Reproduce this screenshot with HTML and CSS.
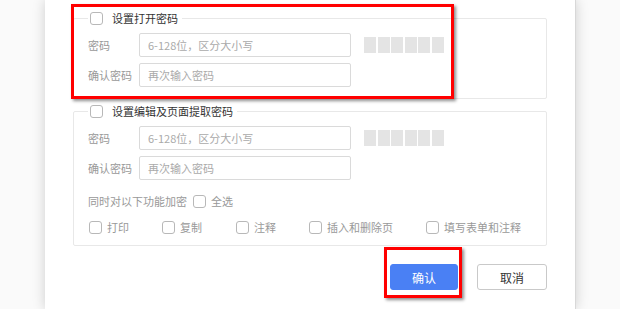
FILE: index.html
```html
<!DOCTYPE html>
<html>
  <head>
    <meta charset="UTF-8" />
    <title>加密</title>
    <link rel="stylesheet" href="styles.css">
  </head>

  <body>
    <div class="dialog">
      <fieldset class="group">
        <legend><label class="check"><span class="box"></span><span class="title">设置打开密码</span></label></legend>
        <div class="row">
          <span class="label">密码</span>
          <input class="input" type="password" placeholder="6-128位，区分大小写" />
          <div class="meter"><i></i><i></i><i></i><i></i><i></i><i></i></div>
        </div>
        <div class="row">
          <span class="label">确认密码</span>
          <input class="input" type="password" placeholder="再次输入密码" />
        </div>
      </fieldset>

      <fieldset class="group second">
        <legend><label class="check"><span class="box"></span><span class="title">设置编辑及页面提取密码</span></label></legend>
        <div class="row">
          <span class="label">密码</span>
          <input class="input" type="password" placeholder="6-128位，区分大小写" />
          <div class="meter"><i></i><i></i><i></i><i></i><i></i><i></i></div>
        </div>
        <div class="row">
          <span class="label">确认密码</span>
          <input class="input" type="password" placeholder="再次输入密码" />
        </div>
        <div class="all">
          同时对以下功能加密
          <label class="check"><span class="box"></span>全选</label>
        </div>
        <div class="perms">
          <label class="check"><span class="box"></span>打印</label>
          <label class="check"><span class="box"></span>复制</label>
          <label class="check"><span class="box"></span>注释</label>
          <label class="check"><span class="box"></span>插入和删除页</label>
          <label class="check"><span class="box"></span>填写表单和注释</label>
        </div>
      </fieldset>

      <div class="actions">
        <button class="btn primary">确认</button>
        <button class="btn">取消</button>
      </div>
    </div>

    <div class="mark mark-top"></div>
    <div class="mark mark-ok"></div>
  </body>
</html>
```

FILE: styles.css
```css
html,
body {
  margin: 0;
  height: 100%;
  overflow: hidden;
}

body {
  position: relative;
  background-color: #fafafa;
  font-family: "Noto Sans CJK SC", "Noto Sans", sans-serif;
  font-size: 11px;
  color: #999;
}

.dialog {
  margin-left: 45px;
  width: 531px;
  height: 100%;
  box-sizing: border-box;
  padding: 11px 28px 0 28px;
  background: #fff;
  border-right: 1px solid #d8d8d8;
  box-shadow: 0 0 12px rgba(0, 0, 0, 0.18);
}

.group {
  margin: 0;
  padding: 8px 14px 11px 14px;
  border: 1px solid #e8e8e8;
  border-radius: 2px;
  min-inline-size: 0;
}

.group.second {
  margin-top: 5px;
  padding-bottom: 9px;
}

.group legend {
  margin-left: 0;
  padding: 0 4px 0 2px;
  height: 14px;
  line-height: 14px;
}

.check {
  display: inline-flex;
  align-items: center;
  gap: 5px;
  color: #999;
  cursor: pointer;
}

.box {
  width: 11px;
  height: 11px;
  border: 1px solid #b8b8b8;
  border-radius: 3px;
  background: #fff;
  flex-shrink: 0;
}

.title {
  margin-left: 4px;
  color: #333;
}

.row {
  display: flex;
  align-items: center;
  height: 24px;
}

.row + .row {
  margin-top: 6px;
}

.label {
  width: 51px;
  flex-shrink: 0;
}

.input {
  width: 212px;
  height: 24px;
  box-sizing: border-box;
  margin: 0;
  padding: 0 8px;
  border: 1px solid #dadada;
  border-radius: 2px;
  font-family: inherit;
  font-size: 11px;
  color: #333;
  outline: none;
}

.input::placeholder {
  color: #aaa;
}

.meter {
  display: flex;
  gap: 1.5px;
  margin-left: 13px;
  height: 16px;
}

.meter i {
  width: 12px;
  background: #e4e4e4;
}

.all {
  display: flex;
  align-items: center;
  gap: 6px;
  margin-top: 12px;
  height: 18px;
}

.perms {
  display: grid;
  grid-template-columns: 73px 74px 73px 117px auto;
  align-items: center;
  margin-top: 8px;
  height: 18px;
  padding-left: 1px;
}

.actions {
  display: flex;
  justify-content: flex-end;
  gap: 19px;
  margin-top: 18px;
}

.btn {
  width: 70px;
  height: 26px;
  margin: 0;
  border: 1px solid #c9c9c9;
  border-radius: 3px;
  background: #fff;
  font-family: inherit;
  font-size: 12px;
  color: #333;
  cursor: pointer;
}

.btn.primary {
  width: 68px;
  border-color: #4a80f4;
  background: #4a80f4;
  color: #fff;
}

.mark {
  position: absolute;
  box-sizing: border-box;
  border: 3px solid #ff0000;
  box-shadow: 2px 2px 3px rgba(0, 0, 0, 0.45);
}

.mark-top {
  left: 71px;
  top: 4px;
  width: 383px;
  height: 95px;
}

.mark-ok {
  left: 384px;
  top: 247px;
  width: 78px;
  height: 51px;
}
```
